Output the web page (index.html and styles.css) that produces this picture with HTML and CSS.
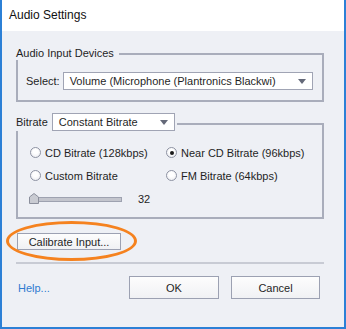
FILE: index.html
```html
<!DOCTYPE html>
<html lang="en">
<head>
  <meta charset="UTF-8">
  <title>Audio Settings</title>
  <link rel="stylesheet" href="styles.css">
</head>
<body>
  <div class="window">
    <div class="titlebar">Audio Settings</div>
    <div class="content">

      <div class="group devices">
        <div class="group-head">
          <span class="caption">Audio Input Devices</span>
          <span class="rule"></span>
        </div>
        <div class="group-body">
          <div class="select-row">
            <span>Select:</span>
            <div class="dropdown wide">Volume (Microphone (Plantronics Blackwi)<span class="arrow"></span></div>
          </div>
        </div>
      </div>

      <div class="group bitrate">
        <div class="group-head">
          <span class="caption">Bitrate</span>
          <div class="dropdown small">Constant Bitrate<span class="arrow"></span></div>
          <span class="rule"></span>
        </div>
        <div class="group-body">
          <div class="radio-grid">
            <label class="radio"><span class="circle"></span>CD Bitrate (128kbps)</label>
            <label class="radio"><span class="circle checked"></span>Near CD Bitrate (96kbps)</label>
            <label class="radio"><span class="circle"></span>Custom Bitrate</label>
            <label class="radio"><span class="circle"></span>FM Bitrate (64kbps)</label>
          </div>
          <div class="slider-row">
            <div class="track">
              <svg class="thumb" width="10" height="11" viewBox="0 0 10 11">
                <path d="M0.5 10.5 V4 L5 0.5 L9.5 4 V10.5 Z" fill="#c9cbd2" stroke="#8b8f9c"/>
              </svg>
            </div>
            <span class="value">32</span>
          </div>
        </div>
      </div>

      <div class="calibrate-row">
        <button class="btn calibrate">Calibrate Input...</button>
        <span class="highlight"></span>
      </div>

      <div class="separator"></div>

      <div class="footer">
        <a class="help">Help...</a>
        <button class="btn ok">OK</button>
        <button class="btn cancel">Cancel</button>
      </div>

    </div>
  </div>
</body>
</html>
```

FILE: styles.css
```css
* {
  box-sizing: border-box;
}
body {
  margin: 0;
  font-family: "Liberation Sans", Arial, sans-serif;
  font-size: 11px;
  color: #1f1f1f;
}
.window {
  width: 346px;
  height: 329px;
  background: #eef0f5;
  border: 2px solid #2c80d6;
  border-top: 0;
}
.titlebar {
  height: 31px;
  background: #fff;
  padding-left: 7px;
  font-size: 12px;
  line-height: 31px;
  color: #111;
}
.content {
  padding: 15px 20px 0 14px;
}

/* group boxes */
.group-head {
  display: flex;
  height: 14px;
  line-height: 14px;
}
.group-head .caption {
  padding-right: 5px;
}
.group-head .rule {
  flex: 1;
  margin-top: 7px;
  border-top: 2px solid #a9adbb;
  border-right: 2px solid #a9adbb;
}
.group-body {
  border: 2px solid #a9adbb;
  border-top: 0;
}
.devices .group-body {
  padding: 12px 9px 10px 8px;
}
.bitrate {
  margin-top: 11px;
}
.bitrate .group-head {
  height: 18px;
  line-height: 18px;
}
.bitrate .caption {
  padding-right: 4px;
}
.bitrate .rule {
  margin-top: 10px;
  margin-left: 2px;
}
.bitrate .group-body {
  padding: 10px 8px 6px 12px;
}

/* dropdowns */
.select-row {
  display: flex;
  align-items: center;
}
.dropdown {
  display: flex;
  align-items: center;
  height: 18px;
  background: #fff;
  border: 1px solid #a0a4b4;
  padding: 0 6px 0 6px;
  white-space: nowrap;
}
.dropdown.wide {
  flex: 1;
  margin-left: 3px;
}
.dropdown.small {
  width: 123px;
}
.arrow {
  margin-left: auto;
  width: 0;
  height: 0;
  border-left: 4px solid transparent;
  border-right: 4px solid transparent;
  border-top: 5px solid #646979;
}

/* radios */
.radio-grid {
  display: grid;
  grid-template-columns: 136px 1fr;
  grid-auto-rows: 23px;
}
.radio {
  display: flex;
  align-items: center;
  gap: 4px;
}
.circle {
  width: 11px;
  height: 11px;
  border-radius: 50%;
  border: 1px solid #8e93a3;
  background: radial-gradient(circle at 50% 40%, #ffffff 30%, #e6e7ec 100%);
  display: flex;
  align-items: center;
  justify-content: center;
}
.circle.checked::after {
  content: "";
  width: 4px;
  height: 4px;
  border-radius: 50%;
  background: #1a1a1a;
}

/* slider */
.slider-row {
  display: flex;
  align-items: center;
  height: 24px;
}
.track {
  position: relative;
  width: 93px;
  height: 5px;
  margin-left: -1px;
  background: #c3c5cd;
  border: 1px solid #9ea2b0;
}
.thumb {
  position: absolute;
  left: -1px;
  top: -5px;
}
.value {
  margin-left: 16px;
}

/* buttons */
.btn {
  font-family: "Liberation Sans", Arial, sans-serif;
  font-size: 11px;
  color: #1f1f1f;
  background: linear-gradient(#fdfdfd, #f0f1f4);
  border: 1px solid #9ca1b2;
  padding: 0;
  cursor: pointer;
}
.calibrate-row {
  position: relative;
  margin-top: 14px;
  height: 17px;
}
.calibrate {
  width: 104px;
  height: 17px;
  margin-left: 1px;
}
.highlight {
  position: absolute;
  left: -10px;
  top: -12px;
  width: 131px;
  height: 40px;
  border: 3px solid #f5821f;
  border-radius: 50%;
}
.separator {
  margin-top: 12px;
  height: 2px;
  background: #c8cbd4;
}
.footer {
  display: flex;
  align-items: center;
  margin-top: 12px;
  height: 23px;
}
.help {
  padding-left: 2px;
  color: #2f7bd0;
  cursor: pointer;
}
.ok {
  margin-left: auto;
  width: 90px;
  height: 23px;
}
.cancel {
  margin-left: 12px;
  margin-right: 4px;
  width: 89px;
  height: 23px;
}
```
